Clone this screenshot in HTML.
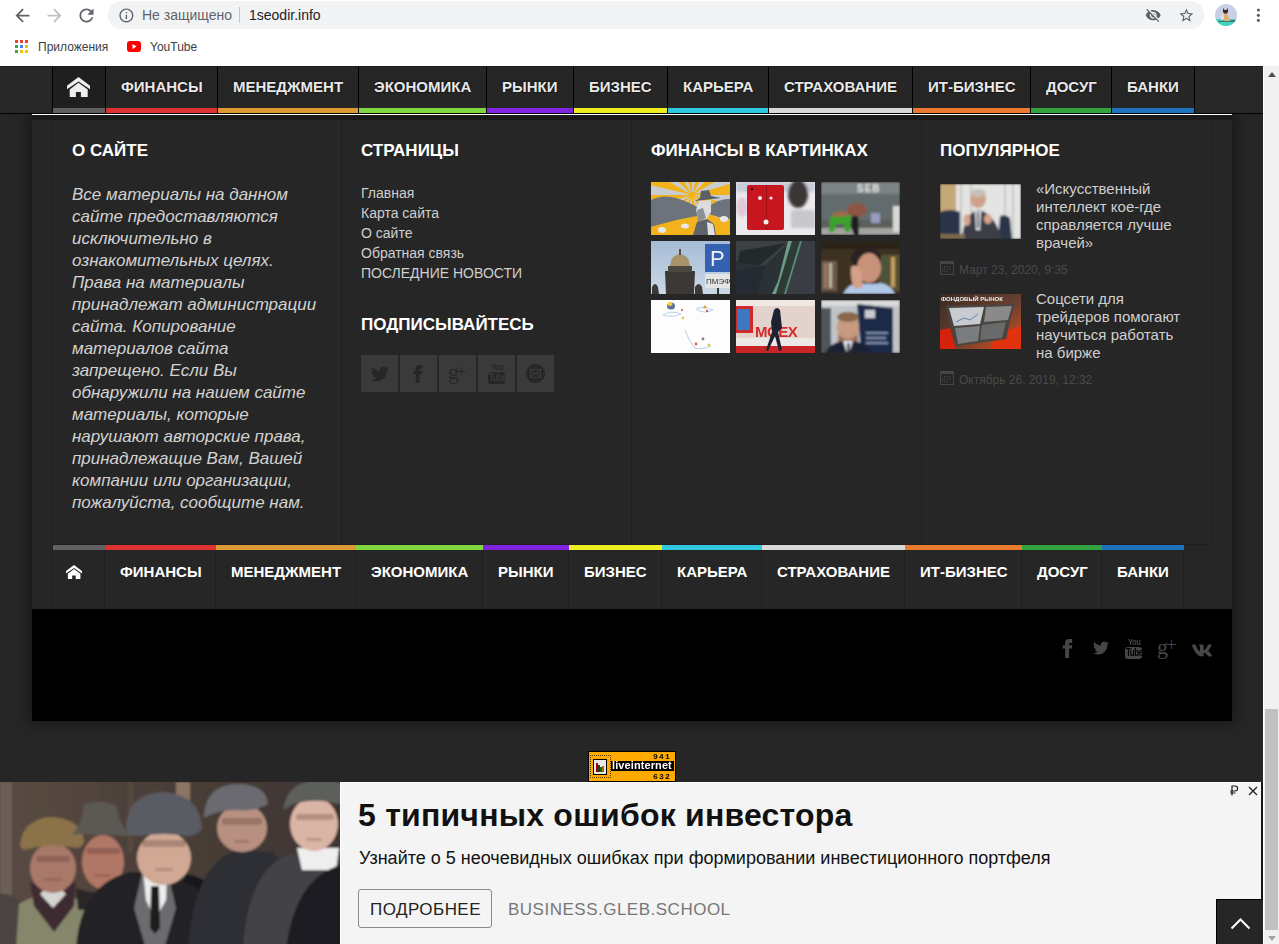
<!DOCTYPE html>
<html><head><meta charset="utf-8">
<style>
*{margin:0;padding:0;box-sizing:border-box}
html,body{width:1279px;height:944px;overflow:hidden}
body{position:relative;background:#262626;font-family:"Liberation Sans",sans-serif}
.abs{position:absolute}
#chrome{position:absolute;left:0;top:0;width:1279px;height:66px;background:#fff}
#addr{position:absolute;left:108px;top:1px;width:1096px;height:28px;border-radius:14px;background:#f1f3f4}
.ctext{position:absolute;font-size:14px;white-space:nowrap;line-height:16px}
#topnav{position:absolute;left:0;top:66px;width:1263px;height:48px;background:#282828;border-top:1px solid #1a1a1a;border-bottom:1px solid #000}
#topnav .items{position:absolute;left:52px;top:0;height:46px;display:flex;border-left:1px solid #000}
#topnav .it{height:46px;border-right:1px solid #000;background:#262626;color:#e8e8e8;font-weight:bold;font-size:15px;line-height:15px;text-align:center;position:relative}
#topnav .it span{position:absolute;left:15px;top:11.5px;white-space:nowrap;text-shadow:0 0 2px #000}
#topnav .it i{position:absolute;left:0;right:0;bottom:0;height:5px}
#wrap{position:absolute;left:32px;top:114px;width:1200px;height:495px;background:#262626;border-top:1px solid #fff}
#strip{position:absolute;left:0;top:0;width:1200px;height:5px;background:#1b1b1b}
#widgets{position:absolute;left:52px;top:120px;width:1159px;height:425px;border-left:1px solid #1f1f1f;border-bottom:1px solid #1e1e1e}
.col{position:absolute;top:0;height:424px;border-right:1px solid #1f1f1f}
.wt{position:absolute;font-size:17px;font-weight:bold;color:#fff;white-space:nowrap;line-height:20px}
#botnav{position:absolute;left:52px;top:545px;height:64px;display:flex;border-left:1px solid #1f1f1f}
#botnav .it{height:64px;border-right:1px solid #1f1f1f;color:#fff;font-weight:bold;font-size:15px;line-height:15px;position:relative}
#botnav .it span{position:absolute;left:15px;top:19px;white-space:nowrap}
#botnav .it i{position:absolute;left:0;right:-1px;top:0;height:5px}
#black{position:absolute;left:32px;top:609px;width:1200px;height:112px;background:#000}
#ad{position:absolute;left:0;top:782px;width:1263px;height:162px;background:#f4f4f4;border-right:2px solid #151515}
#sb{position:absolute;left:1263px;top:66px;width:16px;height:878px;background:#f1f1f1;border-left:1px solid #fff}
</style></head><body>
<div id="chrome">
  <div id="addr"></div>
  <div class="ctext" style="left:142px;top:7px;color:#5f6368">Не защищено</div>
  <div class="abs" style="left:239px;top:7px;width:1px;height:16px;background:#c4c7c5"></div>
  <div class="ctext" style="left:249px;top:7px;color:#202124">1seodir.info</div>

  <svg class="abs" style="left:11.5px;top:4.5px" width="21" height="21" viewBox="0 0 24 24"><path fill="#5f6368" d="M20 11H7.83l5.59-5.59L12 4l-8 8 8 8 1.41-1.41L7.83 13H20v-2z"/></svg>
  <svg class="abs" style="left:43.5px;top:4.5px" width="21" height="21" viewBox="0 0 24 24"><path fill="#bdc1c6" d="M4 11h12.17l-5.59-5.59L12 4l8 8-8 8-1.41-1.41L16.17 13H4v-2z"/></svg>
  <svg class="abs" style="left:75.5px;top:4.5px" width="21" height="21" viewBox="0 0 24 24"><path fill="#5f6368" d="M17.65 6.35C16.2 4.9 14.21 4 12 4c-4.42 0-7.99 3.58-7.99 8s3.57 8 7.99 8c3.73 0 6.84-2.55 7.73-6h-2.08c-.82 2.33-3.04 4-5.650 4-3.31 0-6-2.69-6-6s2.69-6 6-6c1.66 0 3.14.69 4.22 1.78L13 11h7V4l-2.35 2.35z"/></svg>
  <svg class="abs" style="left:117.6px;top:6.6px" width="16.8" height="16.8" viewBox="0 0 24 24"><path fill="#5f6368" d="M11 7h2v2h-2zm0 4h2v6h-2zm1-9C6.48 2 2 6.48 2 12s4.48 10 10 10 10-4.48 10-10S17.52 2 12 2zm0 18c-4.41 0-8-3.590-8-8s3.59-8 8-8 8 3.59 8 8-3.59 8-8 8z"/></svg>
  <svg class="abs" style="left:1145.3px;top:6.7px" width="16.4" height="16.4" viewBox="0 0 24 24"><path fill="#5f6368" d="M12 7c2.76 0 5 2.24 5 5 0 .65-.13 1.26-.36 1.83l2.92 2.92c1.51-1.26 2.7-2.89 3.43-4.75-1.73-4.39-6-7.5-11-7.5-1.4 0-2.74.25-3.980.7l2.16 2.16C10.74 7.13 11.35 7 12 7zM2 4.27l2.28 2.28.46.46C3.08 8.3 1.78 10.02 1 12c1.73 4.39 6 7.5 11 7.5 1.55 0 3.03-.3 4.38-.84l.42.42L19.73 22 21 20.73 3.27 3 2 4.27zM7.53 9.8l1.55 1.55c-.05.21-.08.43-.08.65 0 1.66 1.34 3 3 3 .22 0 .44-.03.65-.08l1.55 1.55c-.67.33-1.41.53-2.2.53-2.76 0-5-2.24-5-5 0-.79.2-1.53.53-2.2zm4.31-.78l3.15 3.15.02-.16c0-1.66-1.34-3-3-3l-.17.01z"/></svg>
  <svg class="abs" style="left:1177.6px;top:6.9px" width="16.8" height="16.8" viewBox="0 0 24 24"><path fill="#5f6368" d="M22 9.24l-7.19-.62L12 2 9.19 8.63 2 9.24l5.46 4.73L5.820 21 12 17.27 18.18 21l-1.63-7.03L22 9.24zM12 15.4l-3.76 2.27 1-4.28-3.32-2.88 4.38-.38L12 6.1l1.71 4.04 4.38.38-3.32 2.88 1 4.28L12 15.4z"/></svg>
  <svg class="abs" style="left:1215px;top:4px" width="22" height="22" viewBox="0 0 22 22"><defs><clipPath id="avc"><circle cx="11" cy="11" r="11"/></clipPath></defs><g clip-path="url(#avc)"><rect width="22" height="22" fill="#c9d0e6"/><rect y="15" width="22" height="7" fill="#45d3bf"/><path d="M3 17 L20 16 L20 18 L3 18z" fill="#3a3a3a" opacity=".6"/><path d="M8 4 L9.5 6 L11.5 6 L13 4 L13 8 L12 9.5 L13.5 12 L14.5 15.5 L15.5 17 L9 17 L9 12 L8.8 8z" fill="#d8b27a"/><path d="M8 4 L9.5 6 L11.5 6 L13 4 L13 8 L11.8 9.6 L9.2 9.6 L8 8z" fill="#3a2a20"/><path d="M6.5 10 L8.5 12 L8.5 16 L6 16z" fill="#e8e8ee" opacity=".7"/></g></svg>
  <svg class="abs" style="left:1255px;top:7px" width="7" height="16" viewBox="0 0 7 16"><circle cx="3.4" cy="3" r="1.6" fill="#5f6368"/><circle cx="3.4" cy="8.3" r="1.6" fill="#5f6368"/><circle cx="3.4" cy="13.3" r="1.6" fill="#5f6368"/></svg>
  <svg class="abs" style="left:15px;top:40px" width="13" height="13" viewBox="0 0 13 13">
    <rect x="0" y="0" width="3" height="3" fill="#ea4335"/><rect x="5" y="0" width="3" height="3" fill="#ea4335"/><rect x="10" y="0" width="3" height="3" fill="#ea4335"/>
    <rect x="0" y="5" width="3" height="3" fill="#34a853"/><rect x="5" y="5" width="3" height="3" fill="#4285f4"/><rect x="10" y="5" width="3" height="3" fill="#fbbc05"/>
    <rect x="0" y="10" width="3" height="3" fill="#34a853"/><rect x="5" y="10" width="3" height="3" fill="#fbbc05"/><rect x="10" y="10" width="3" height="3" fill="#fbbc05"/>
  </svg>
  <svg class="abs" style="left:127px;top:41px" width="14" height="11" viewBox="0 0 14 11"><rect x="0" y="0" width="14" height="11" rx="3" fill="#ff0000"/><path d="M5.5 3 L9.5 5.5 L5.5 8z" fill="#fff"/></svg>
  <div class="ctext" style="left:38px;top:39px;font-size:12px;color:#3c4043">Приложения</div>
  <div class="ctext" style="left:150px;top:39px;font-size:12px;color:#3c4043">YouTube</div>
</div>

<div class="abs" style="left:32px;top:114px;width:1200px;height:607px;box-shadow:0 0 14px 2px rgba(0,0,0,.45);background:#262626"></div>
<div id="topnav">
  <div class="items">
    <div class="it" style="width:53px;background:#1f1f1f"><svg class="abs" style="left:14px;top:10px" width="23" height="20" viewBox="0 0 23 20"><path fill="#eee" d="M11.5 0 L23 8.7 L23 12.3 L11.5 4.4 L0 12.3 L0 8.7z"/><path fill="#eee" d="M11.5 5.8 L20.7 12.4 L20.7 20 L13.9 20 L13.9 15 L8.9 15 L8.9 20 L2.7 20 L2.7 12.4z"/></svg><i style="background:#606060"></i></div>
    <div class="it" style="width:112px"><span>ФИНАНСЫ</span><i style="background:#dd3333"></i></div>
    <div class="it" style="width:141px"><span>МЕНЕДЖМЕНТ</span><i style="background:#dd9933"></i></div>
    <div class="it" style="width:128px"><span>ЭКОНОМИКА</span><i style="background:#81d742"></i></div>
    <div class="it" style="width:87px"><span>РЫНКИ</span><i style="background:#8224e3"></i></div>
    <div class="it" style="width:94px"><span>БИЗНЕС</span><i style="background:#eeee22"></i></div>
    <div class="it" style="width:101px"><span>КАРЬЕРА</span><i style="background:#30c8e0"></i></div>
    <div class="it" style="width:144px"><span>СТРАХОВАНИЕ</span><i style="background:#d8d8d8"></i></div>
    <div class="it" style="width:118px"><span>ИТ-БИЗНЕС</span><i style="background:#ea7a30"></i></div>
    <div class="it" style="width:81px"><span>ДОСУГ</span><i style="background:#33a340"></i></div>
    <div class="it" style="width:83px"><span>БАНКИ</span><i style="background:#1e73be"></i></div>
  </div>
</div>

<div id="wrap"><div id="strip"></div></div>

<div id="widgets">
  <div class="col" style="left:0;width:289px"></div>
  <div class="col" style="left:289px;width:290px"></div>
  <div class="col" style="left:579px;width:290px"></div>
  <div class="col" style="left:869px;width:290px"></div>
</div>


<div class="wt" style="left:72px;top:141px">О САЙТЕ</div>
<div class="abs" style="left:72px;top:184px;width:260px;font-size:17px;font-style:italic;line-height:22px;color:#d2d2d2;white-space:nowrap">Все материалы на данном<br>сайте предоставляются<br>исключительно в<br>ознакомительных целях.<br>Права на материалы<br>принадлежат администрации<br>сайта. Копирование<br>материалов сайта<br>запрещено. Если Вы<br>обнаружили на нашем сайте<br>материалы, которые<br>нарушают авторские права,<br>принадлежащие Вам, Вашей<br>компании или организации,<br>пожалуйста, сообщите нам.</div>

<div class="wt" style="left:361px;top:141px">СТРАНИЦЫ</div>
<div class="abs" style="left:361px;top:183px;font-size:14px;line-height:20px;color:#cfcfcf;white-space:nowrap">Главная<br>Карта сайта<br>О сайте<br>Обратная связь<br>ПОСЛЕДНИЕ НОВОСТИ</div>
<div class="wt" style="left:361px;top:315px">ПОДПИСЫВАЙТЕСЬ</div>

<div class="abs" style="left:361px;top:355px;width:37px;height:37px;background:#3a3a3a"><svg class="abs" style="left:10px;top:10px" width="18" height="18" viewBox="0 0 24 24"><path fill="#262626" d="M23.953 4.57a10 10 0 01-2.825.775 4.958 4.958 0 002.163-2.723c-.951.555-2.005.959-3.127 1.184a4.92 4.92 0 00-8.384 4.482C7.69 8.095 4.067 6.13 1.64 3.162a4.822 4.822 0 00-.666 2.475c0 1.71.87 3.213 2.188 4.096a4.904 4.904 0 01-2.228-.616v.06a4.923 4.923 0 003.946 4.827 4.996 4.996 0 01-2.212.085 4.936 4.936 0 004.604 3.417 9.867 9.867 0 01-6.102 2.105c-.39 0-.779-.023-1.17-.067a13.995 13.995 0 007.557 2.209c9.053 0 13.998-7.496 13.998-13.985 0-.21 0-.42-.015-.63A9.935 9.935 0 0024 4.59z"/></svg></div>
<div class="abs" style="left:400px;top:355px;width:37px;height:37px;background:#3a3a3a"><svg class="abs" style="left:9px;top:10px" width="18" height="18" viewBox="0 0 24 24"><path fill="#262626" d="M9 8H6v4h3v12h5V12h3.642L18 8h-4V6.333C14 5.378 14.192 5 15.115 5H18V0h-3.808C10.596 0 9 1.583 9 4.615V8z"/></svg></div>
<div class="abs" style="left:439px;top:355px;width:37px;height:37px;background:#3a3a3a"><div class="abs" style="left:9px;top:6px;font-family:'Liberation Serif',serif;font-size:22px;line-height:22px;color:#262626">g</div><div class="abs" style="left:17px;top:8px;font-family:'Liberation Serif',serif;font-size:18px;line-height:18px;color:#262626">+</div></div>
<div class="abs" style="left:478px;top:355px;width:37px;height:37px;background:#3a3a3a"><div class="abs" style="left:10px;top:9px"><div class="abs" style="left:0;top:0;width:17px;height:20px"><div class="abs" style="left:3px;top:-1px;font-size:9px;line-height:9px;font-weight:bold;color:#262626;letter-spacing:-0.5px;transform:scaleX(.85);transform-origin:0 0">You</div><div class="abs" style="left:0;top:8px;width:17px;height:12px;border-radius:3px;background:#262626"></div><div class="abs" style="left:1px;top:9px;font-size:10px;line-height:10px;font-weight:bold;color:#3a3a3a;letter-spacing:-0.6px;transform:scaleX(.8);transform-origin:0 0">Tube</div></div></div></div>
<div class="abs" style="left:517px;top:355px;width:37px;height:37px;background:#3a3a3a"><svg class="abs" style="left:9px;top:9px" width="19" height="19" viewBox="0 0 19 19"><circle cx="9.5" cy="9.5" r="9.5" fill="#262626"/><rect x="4.5" y="5.5" width="10" height="8" fill="none" stroke="#3a3a3a" stroke-width="1.2"/><path d="M4.5 5.5 L9.5 10 L14.5 5.5 M4.5 13.5 L8.2 9 M14.5 13.5 L10.8 9" fill="none" stroke="#3a3a3a" stroke-width="1.1"/></svg></div>

<div class="wt" style="left:651px;top:141px">ФИНАНСЫ В КАРТИНКАХ</div>
<div class="abs" id="g1" style="left:651px;top:182px;width:79px;height:53px;overflow:hidden"><svg width="79" height="53" viewBox="0 0 79 53"><defs><filter id="b1"><feGaussianBlur stdDeviation="0.5"/></filter></defs><g filter="url(#b1)">
<rect width="79" height="53" fill="#f2b21c"/>
<path d="M41 13 L131.0 13.0 L128.5 34.0z" fill="#c9cdd2"/><path d="M41 13 L118.9 58.0 L106.3 75.0z" fill="#c9cdd2"/><path d="M41 13 L86.0 90.9 L66.6 99.3z" fill="#c9cdd2"/><path d="M41 13 L41.0 103.0 L20.0 100.5z" fill="#c9cdd2"/><path d="M41 13 L-4.0 90.9 L-21.0 78.3z" fill="#c9cdd2"/><path d="M41 13 L-36.9 58.0 L-45.3 38.6z" fill="#c9cdd2"/><path d="M41 13 L-49.0 13.0 L-46.5 -8.0z" fill="#c9cdd2"/><path d="M41 13 L-36.9 -32.0 L-24.3 -49.0z" fill="#c9cdd2"/><path d="M41 13 L-4.0 -64.9 L15.4 -73.3z" fill="#c9cdd2"/><path d="M41 13 L41.0 -77.0 L62.0 -74.5z" fill="#c9cdd2"/><path d="M41 13 L86.0 -64.9 L103.0 -52.3z" fill="#c9cdd2"/><path d="M41 13 L118.9 -32.0 L127.3 -12.6z" fill="#c9cdd2"/>
<circle cx="41" cy="13" r="3.5" fill="#f4b418"/>
<path d="M0 18 Q12 12 25 16 Q40 20 52 29 L52 34 Q30 38 0 45z" fill="#6c737a"/>
<path d="M58 24 Q70 16 79 17 L79 37 Q68 36 58 32z" fill="#6c737a"/>
<path d="M0 45 Q30 36 52 33 L79 37 L79 53 L0 53z" fill="#f2b21c"/>
<ellipse cx="11" cy="48" rx="4" ry="3" fill="#e8e8e8"/><ellipse cx="34" cy="44" rx="4" ry="2.5" fill="#e8e8e8"/><ellipse cx="73" cy="37" rx="4" ry="3" fill="#e8e8e8"/>
<path d="M44 19 L70 16 L60 14 L58 8 L50 9 L49 16z" fill="#5a6068"/>
<path d="M48 19 L60 18 L60 30 L55 38 L47 36 L45 28z" fill="#dcdcdc"/>
<path d="M46 28 L52 26 L55 36 L47 40z" fill="#8a9098"/>
<path d="M42 53 L46 40 L56 37 L63 42 L65 53z" fill="#5e646c"/>
<path d="M56 40 L62 42 L64 53 L57 53z" fill="#e0e0e0"/>
</g></svg></div>
<div class="abs" id="g2" style="left:736px;top:182px;width:79px;height:53px;overflow:hidden"><svg width="79" height="53" viewBox="0 0 79 53"><defs><filter id="b2"><feGaussianBlur stdDeviation="1.5"/></filter></defs>
<rect width="79" height="53" fill="#eceaee"/>
<g filter="url(#b2)"><rect x="0" y="0" width="79" height="10" fill="#c8ccd8"/><ellipse cx="62" cy="12" rx="10" ry="14" fill="#3a3436"/><rect x="55" y="28" width="24" height="18" fill="#c8c8cc"/><ellipse cx="6" cy="25" rx="6" ry="10" fill="#e0c8d8"/></g>
<rect x="11" y="3" width="37" height="45" rx="2" fill="#c8161e"/>
<rect x="30" y="3" width="1" height="45" fill="#a01016"/>
<circle cx="24" cy="16" r="2" fill="#f0f0f0"/><circle cx="35" cy="16" r="1.6" fill="#f0f0f0"/><circle cx="30" cy="40" r="2.5" fill="#f0f0f0"/>
<circle cx="16" cy="7" r="1.3" fill="#400"/>
</svg></div>
<div class="abs" id="g3" style="left:821px;top:182px;width:79px;height:53px;overflow:hidden"><svg width="79" height="53" viewBox="0 0 79 53"><defs><filter id="b3"><feGaussianBlur stdDeviation="0.8"/></filter></defs><g filter="url(#b3)">
<rect width="79" height="53" fill="#6a7272"/>
<rect x="0" y="0" width="79" height="12" fill="#7c8384"/>
<rect x="0" y="12" width="79" height="26" fill="#646c6c"/>
<rect x="0" y="38" width="79" height="8" fill="#5a5e5c"/>
<rect x="0" y="46" width="79" height="7" fill="#a4a4a0"/>
<text x="36" y="10" font-family="Liberation Sans" font-weight="bold" font-size="10" fill="#e8e8e8" letter-spacing="1">SEB</text>
<ellipse cx="36" cy="28" rx="10" ry="7" fill="#8c5444"/>
<path d="M9 36 Q12 30 24 30 L30 34 L29 50 L24 50 L23 42 L15 42 L13 50 L8 50z" fill="#3aa22c"/>
<path d="M12 31 Q18 28 27 30 L27 34 L12 35z" fill="#9c6a4c"/>
<path d="M31 34 L37 34 L38 53 L33 53 L30 45z" fill="#1a1a1a"/>
<rect x="72" y="24" width="7" height="26" fill="#d8d8d4"/>
<rect x="50" y="31" width="9" height="10" fill="#9a9ac0"/>
</g></svg></div>
<div class="abs" id="g4" style="left:651px;top:241px;width:79px;height:53px;overflow:hidden"><svg width="79" height="53" viewBox="0 0 79 53"><defs><linearGradient id="sky4" x1="0" y1="0" x2="0" y2="1"><stop offset="0" stop-color="#a6bcd6"/><stop offset="1" stop-color="#cad8e6"/></linearGradient><filter id="b4"><feGaussianBlur stdDeviation="0.5"/></filter></defs><g filter="url(#b4)">
<rect width="79" height="53" fill="url(#sky4)"/>
<path d="M19 25 Q20 14 29 13 Q38 14 39 25z" fill="#a89468"/>
<rect x="28" y="8" width="2" height="6" fill="#5a5040"/>
<path d="M14 30 L44 30 L43 53 L15 53z" fill="#3a3836"/>
<rect x="17" y="25" width="24" height="6" fill="#4a4640"/>
<path d="M1 53 L1 46 Q4 40 7 46 L8 53z" fill="#3a3836"/>
<path d="M44 53 L44 46 Q48 40 51 46 L52 53z" fill="#3a3836"/>
<rect x="54" y="3" width="25" height="28" fill="#3462b0"/>
<text x="59" y="25" font-family="Liberation Sans" font-size="22" fill="#f0f0f0">P</text>
<rect x="54" y="33" width="25" height="14" fill="#e4e4e4"/>
<text x="55" y="43" font-family="Liberation Sans" font-size="8" fill="#333">ПМЭФ</text>
<rect x="66" y="47" width="2" height="6" fill="#333"/>
</g></svg></div>
<div class="abs" id="g5" style="left:736px;top:241px;width:79px;height:53px;overflow:hidden"><svg width="79" height="53" viewBox="0 0 79 53"><defs><filter id="b5"><feGaussianBlur stdDeviation="0.7"/></filter></defs><g filter="url(#b5)">
<rect width="79" height="53" fill="#2c3236"/>
<path d="M0 0 L55 0 L28 25 L0 20z" fill="#3a4042"/>
<path d="M4 10 L50 2 L24 24 L2 22z" fill="#23292c"/>
<path d="M66 0 L79 0 L79 53 L50 53z" fill="#3a3c44"/>
<path d="M56 0 L66 0 L50 53 L40 53z" fill="#2e3a36"/>
<path d="M52 0 L56 0 L40 53 L36 53 L42 40z" fill="#6a9a88"/>
<path d="M64 0 L66 0 L50 53 L48 53z" fill="#5a8a78"/>
<path d="M0 30 L30 24 L20 53 L0 53z" fill="#262c30"/>
</g></svg></div>
<div class="abs" id="g6" style="left:821px;top:241px;width:79px;height:53px;overflow:hidden"><svg width="79" height="53" viewBox="0 0 79 53"><defs><filter id="b6"><feGaussianBlur stdDeviation="0.8"/></filter></defs><g filter="url(#b6)">
<rect width="79" height="53" fill="#3c3222"/>
<rect x="0" y="0" width="79" height="8" fill="#2a2418"/>
<rect x="0" y="20" width="16" height="30" fill="#6a5a48"/><rect x="3" y="22" width="3" height="25" fill="#a07860"/><rect x="8" y="22" width="3" height="25" fill="#c0b0a0"/>
<rect x="58" y="14" width="21" height="36" fill="#5a5030"/><rect x="62" y="16" width="3" height="30" fill="#3a5a40"/><rect x="70" y="16" width="4" height="30" fill="#c0a060"/>
<ellipse cx="45" cy="17" rx="15" ry="11" fill="#2a2420"/>
<ellipse cx="48" cy="27" rx="12" ry="15" fill="#c8927a"/>
<path d="M22 53 Q28 42 38 42 Q50 44 60 42 Q70 44 74 53z" fill="#b0c8e8"/>
<path d="M30 26 Q36 22 40 30 L42 46 L34 48 Q29 40 30 26z" fill="#d4a088"/>
</g></svg></div>
<div class="abs" id="g7" style="left:651px;top:300px;width:79px;height:53px;overflow:hidden"><svg width="79" height="53" viewBox="0 0 79 53"><defs><filter id="b7"><feGaussianBlur stdDeviation="0.6"/></filter></defs>
<rect width="79" height="53" fill="#fdfdfd"/><g filter="url(#b7)">
<ellipse cx="20" cy="6" rx="4" ry="3.5" fill="#5a70a0"/><ellipse cx="19" cy="4" rx="2.5" ry="2" fill="#f0d040"/>
<path d="M12 15 Q20 10 30 14 Q22 18 12 15z" fill="none" stroke="#a8c8e0" stroke-width="0.8"/>
<path d="M46 8 Q55 6 62 10 Q54 14 46 10z" fill="none" stroke="#a8c8e0" stroke-width="0.8"/>
<circle cx="54" cy="7" r="1.5" fill="#e0a040"/><circle cx="56" cy="11" r="1.2" fill="#d06060"/>
<circle cx="31" cy="10" r="1.2" fill="#e08060"/><circle cx="32" cy="18" r="1.3" fill="#f0c040"/>
<path d="M34 30 Q38 42 44 48 Q50 50 60 46" fill="none" stroke="#a8c0e0" stroke-width="0.8"/>
<circle cx="45" cy="44" r="1.4" fill="#e06040"/><circle cx="52" cy="39" r="1.4" fill="#808080"/><circle cx="58" cy="45" r="1.3" fill="#e0c040"/>
</g></svg></div>
<div class="abs" id="g8" style="left:736px;top:300px;width:79px;height:53px;overflow:hidden"><svg width="79" height="53" viewBox="0 0 79 53"><defs><filter id="b8"><feGaussianBlur stdDeviation="0.6"/></filter></defs><g filter="url(#b8)">
<rect width="79" height="53" fill="#e2d4cc"/>
<rect x="0" y="0" width="79" height="6" fill="#f0e8e4"/>
<rect x="0" y="6" width="17" height="27" fill="#d02a2a"/><rect x="1" y="9" width="13" height="21" fill="#3a78c0"/>
<text x="19" y="37" font-family="Liberation Sans" font-weight="bold" font-size="15" fill="#d42a2a" letter-spacing="-0.5">MOEX</text>
<rect x="0" y="38" width="79" height="8" fill="#ece8e6"/>
<rect x="0" y="46" width="79" height="7" fill="#c82828"/>
<path d="M38 10 Q41 6 44 10 L46 28 L42 32 L46 50 L43 51 L39 36 L32 51 L30 50 L36 32 L35 22z" fill="#1c2030"/>
</g></svg></div>
<div class="abs" id="g9" style="left:821px;top:300px;width:79px;height:53px;overflow:hidden"><svg width="79" height="53" viewBox="0 0 79 53"><defs><filter id="b9"><feGaussianBlur stdDeviation="0.8"/></filter></defs><g filter="url(#b9)">
<rect width="79" height="53" fill="#c0c4c8"/>
<rect x="0" y="0" width="79" height="6" fill="#d8dadc"/>
<rect x="0" y="8" width="10" height="45" fill="#505458"/>
<path d="M36 4 L72 8 L72 53 L40 53z" fill="#1e2c48"/>
<rect x="44" y="10" width="10" height="8" fill="#c8ccd0"/>
<rect x="45" y="32" width="22" height="2" fill="#8090b0"/><rect x="45" y="37" width="20" height="2" fill="#8090b0"/><rect x="45" y="42" width="22" height="2" fill="#8090b0"/>
<ellipse cx="27" cy="28" rx="11" ry="14" fill="#c89a82"/>
<ellipse cx="27" cy="17" rx="11" ry="5" fill="#8a6848"/>
<path d="M17 34 Q27 44 37 34 L37 42 Q27 48 17 42z" fill="#9a7058"/>
<path d="M4 53 Q10 42 22 41 L32 41 Q44 42 52 53z" fill="#1a2036"/>
<path d="M22 41 L32 41 L28 53 L26 53z" fill="#e8e8ec"/>
<rect x="26" y="43" width="2.5" height="10" fill="#1a1a2a"/>
</g></svg></div>

<div class="wt" style="left:940px;top:141px">ПОПУЛЯРНОЕ</div>
<div class="abs" id="p1" style="left:940px;top:184px;width:81px;height:55px;overflow:hidden"><svg width="81" height="55" viewBox="0 0 81 55"><defs><filter id="bp1"><feGaussianBlur stdDeviation="0.8"/></filter></defs><g filter="url(#bp1)">
<rect width="81" height="55" fill="#d8d8d8"/>
<rect x="0" y="0" width="16" height="55" fill="#c4a878"/>
<rect x="16" y="0" width="65" height="55" fill="#e4e4e2"/>
<rect x="20" y="0" width="2" height="55" fill="#c8c8c8"/><rect x="30" y="0" width="2" height="55" fill="#c8c8c8"/><rect x="64" y="0" width="2" height="55" fill="#c8c8c8"/><rect x="72" y="0" width="2" height="55" fill="#c8c8c8"/>
<path d="M0 28 Q10 24 20 28 L20 50 L0 52z" fill="#2a3448"/>
<path d="M60 32 Q66 30 70 34 L72 55 L58 55z" fill="#2a3448"/>
<ellipse cx="38" cy="15" rx="8" ry="9" fill="#d0a088"/>
<ellipse cx="38" cy="9" rx="8" ry="4" fill="#c8c0b8"/>
<path d="M22 55 Q24 30 38 26 Q54 28 62 55z" fill="#3a3e46"/>
<path d="M35 27 L41 27 L40 46 L36 46z" fill="#e8e8ec"/><rect x="37" y="28" width="2" height="16" fill="#3a4a6a"/>
<ellipse cx="27" cy="36" rx="3.5" ry="6" fill="#d4a48c"/><ellipse cx="48" cy="35" rx="4" ry="5" fill="#d4a48c"/>
<rect x="0" y="50" width="25" height="5" fill="#7a6850"/>
</g></svg></div>
<div class="abs" style="left:1036px;top:180px;font-size:15px;line-height:18px;color:#cfcfcf;white-space:nowrap">«Искусственный<br>интеллект кое-где<br>справляется лучше<br>врачей»</div>
<svg class="abs" style="left:940px;top:261px" width="14" height="14" viewBox="0 0 14 14"><rect x="0.5" y="0.5" width="13" height="13" fill="none" stroke="#454545"/><rect x="0" y="0" width="14" height="3" fill="#454545"/><g fill="#454545"><rect x="4" y="5" width="1.3" height="1.3"/><rect x="6.5" y="5" width="1.3" height="1.3"/><rect x="9" y="5" width="1.3" height="1.3"/><rect x="2" y="7.5" width="1.3" height="1.3"/><rect x="4" y="7.5" width="1.3" height="1.3"/><rect x="6.5" y="7.5" width="1.3" height="1.3"/><rect x="9" y="7.5" width="1.3" height="1.3"/><rect x="2" y="10" width="1.3" height="1.3"/><rect x="4" y="10" width="1.3" height="1.3"/><rect x="6.5" y="10" width="1.3" height="1.3"/></g></svg>
<div class="abs" style="left:959px;top:263px;font-size:12px;line-height:14px;color:#4a4a4a;white-space:nowrap">Март 23, 2020, 9:35</div>
<div class="abs" id="p2" style="left:940px;top:294px;width:81px;height:55px;overflow:hidden"><svg width="81" height="55" viewBox="0 0 81 55"><defs><linearGradient id="gp2" x1="0" y1="0" x2="1" y2="1"><stop offset="0" stop-color="#3a2a24"/><stop offset="0.55" stop-color="#6a4030"/><stop offset="1" stop-color="#e05018"/></linearGradient><filter id="bp2"><feGaussianBlur stdDeviation="0.7"/></filter></defs><g filter="url(#bp2)">
<rect width="81" height="55" fill="url(#gp2)"/>
<path d="M0 36 L10 34 L16 55 L0 55z" fill="#d42010"/>
<path d="M56 40 L81 32 L81 55 L50 55z" fill="#e03010"/>
<path d="M6 12 L74 10 L66 45 L16 52z" fill="#4a4440"/>
<path d="M9 14 L44 13 L40 30 L14 32z" fill="#c8ccd0"/>
<path d="M46 13 L72 12 L68 26 L44 28z" fill="#8a8a8a"/>
<path d="M15 34 L40 32 L38 47 L18 50z" fill="#7a7c80"/>
<path d="M42 31 L66 28 L62 44 L40 46z" fill="#6a6a6a"/>
<path d="M16 28 L24 24 L30 26 L38 20" fill="none" stroke="#4a6a9a" stroke-width="0.8"/>
<text x="1" y="7" font-family="Liberation Sans" font-size="6" font-weight="bold" fill="#f0f0f0">ФОНДОВЫЙ РЫНОК</text>
</g></svg></div>
<div class="abs" style="left:1036px;top:290px;font-size:15px;line-height:18px;color:#cfcfcf;white-space:nowrap">Соцсети для<br>трейдеров помогают<br>научиться работать<br>на бирже</div>
<svg class="abs" style="left:940px;top:371px" width="14" height="14" viewBox="0 0 14 14"><rect x="0.5" y="0.5" width="13" height="13" fill="none" stroke="#454545"/><rect x="0" y="0" width="14" height="3" fill="#454545"/><g fill="#454545"><rect x="4" y="5" width="1.3" height="1.3"/><rect x="6.5" y="5" width="1.3" height="1.3"/><rect x="9" y="5" width="1.3" height="1.3"/><rect x="2" y="7.5" width="1.3" height="1.3"/><rect x="4" y="7.5" width="1.3" height="1.3"/><rect x="6.5" y="7.5" width="1.3" height="1.3"/><rect x="9" y="7.5" width="1.3" height="1.3"/><rect x="2" y="10" width="1.3" height="1.3"/><rect x="4" y="10" width="1.3" height="1.3"/><rect x="6.5" y="10" width="1.3" height="1.3"/></g></svg>
<div class="abs" style="left:959px;top:373px;font-size:12px;line-height:14px;color:#4a4a4a;white-space:nowrap">Октябрь 26, 2019, 12:32</div>

<div id="botnav">
  <div class="it" style="width:52px"><svg class="abs" style="left:13px;top:20px" width="16" height="14" viewBox="0 0 23 20"><path fill="#fff" d="M11.5 0 L23 8.7 L23 12.3 L11.5 4.4 L0 12.3 L0 8.7z"/><path fill="#fff" d="M11.5 5.8 L20.7 12.4 L20.7 20 L13.9 20 L13.9 15 L8.9 15 L8.9 20 L2.7 20 L2.7 12.4z"/></svg><i style="background:#606060"></i></div>
  <div class="it" style="width:111px"><span>ФИНАНСЫ</span><i style="background:#dd3333"></i></div>
  <div class="it" style="width:140px"><span>МЕНЕДЖМЕНТ</span><i style="background:#dd9933"></i></div>
  <div class="it" style="width:127px"><span>ЭКОНОМИКА</span><i style="background:#81d742"></i></div>
  <div class="it" style="width:86px"><span>РЫНКИ</span><i style="background:#8224e3"></i></div>
  <div class="it" style="width:93px"><span>БИЗНЕС</span><i style="background:#eeee22"></i></div>
  <div class="it" style="width:100px"><span>КАРЬЕРА</span><i style="background:#30c8e0"></i></div>
  <div class="it" style="width:143px"><span>СТРАХОВАНИЕ</span><i style="background:#d8d8d8"></i></div>
  <div class="it" style="width:117px"><span>ИТ-БИЗНЕС</span><i style="background:#ea7a30"></i></div>
  <div class="it" style="width:80px"><span>ДОСУГ</span><i style="background:#33a340"></i></div>
  <div class="it" style="width:82px"><span>БАНКИ</span><i style="background:#1e73be"></i></div>
</div>

<div id="black"></div>
<svg class="abs" style="left:1058px;top:639px" width="19" height="19" viewBox="0 0 24 24"><path fill="#464646" d="M9 8H6v4h3v12h5V12h3.642L18 8h-4V6.333C14 5.378 14.192 5 15.115 5H18V0h-3.808C10.596 0 9 1.583 9 4.615V8z"/></svg>
<svg class="abs" style="left:1093px;top:640px" width="16" height="16" viewBox="0 0 24 24"><path fill="#464646" d="M23.953 4.57a10 10 0 01-2.825.775 4.958 4.958 0 002.163-2.723c-.951.555-2.005.959-3.127 1.184a4.92 4.92 0 00-8.384 4.482C7.69 8.095 4.067 6.13 1.64 3.162a4.822 4.822 0 00-.666 2.475c0 1.71.87 3.213 2.188 4.096a4.904 4.904 0 01-2.228-.616v.06a4.923 4.923 0 003.946 4.827 4.996 4.996 0 01-2.212.085 4.936 4.936 0 004.604 3.417 9.867 9.867 0 01-6.102 2.105c-.39 0-.779-.023-1.17-.067a13.995 13.995 0 007.557 2.209c9.053 0 13.998-7.496 13.998-13.985 0-.21 0-.42-.015-.63A9.935 9.935 0 0024 4.59z"/></svg>
<div class="abs" style="left:1125px;top:639px"><div class="abs" style="left:0;top:0;width:17px;height:20px"><div class="abs" style="left:3px;top:-1px;font-size:9px;line-height:9px;font-weight:bold;color:#464646;letter-spacing:-0.5px;transform:scaleX(.85);transform-origin:0 0">You</div><div class="abs" style="left:0;top:8px;width:17px;height:12px;border-radius:3px;background:#464646"></div><div class="abs" style="left:1px;top:9px;font-size:10px;line-height:10px;font-weight:bold;color:#000;letter-spacing:-0.6px;transform:scaleX(.8);transform-origin:0 0">Tube</div></div></div>
<div class="abs" style="left:1157px;top:636px;font-family:'Liberation Serif',serif;font-size:22px;line-height:22px;color:#464646">g</div>
<div class="abs" style="left:1166px;top:635px;font-family:'Liberation Serif',serif;font-size:19px;line-height:19px;color:#464646">+</div>
<svg class="abs" style="left:1187px;top:634.5px" width="30" height="30" viewBox="0 0 24 24"><path fill="#464646" d="M19.376 17.123h-1.744c-.66 0-.864-.525-2.05-1.727-1.033-1-1.49-1.135-1.744-1.135-.356 0-.458.102-.458.593v1.575c0 .424-.135.678-1.253.678-1.846 0-3.896-1.118-5.335-3.202C4.624 10.857 4.030 8.570 4.030 8.096c0-.254.102-.491.593-.491h1.744c.44 0 .61.203.78.677.863 2.49 2.303 4.675 2.896 4.675.22 0 .322-.102.322-.66V9.721c-.068-1.186-.695-1.287-.695-1.710 0-.203.17-.407.44-.407h2.744c.373 0 .508.203.508.643v3.473c0 .372.17.508.271.508.22 0 .407-.136.813-.542 1.254-1.406 2.151-3.574 2.151-3.574.119-.254.322-.491.763-.491h1.744c.525 0 .644.27.525.643-.22 1.017-2.354 4.031-2.354 4.031-.186.305-.254.44 0 .78.186.254.796.779 1.203 1.253.745.847 1.32 1.558 1.473 2.05.17.49-.085.744-.576.744z"/></svg>



<div class="abs" style="left:588px;top:751px;width:88px;height:31px;background:#ffaa00;border:1px solid #000">
  <div class="abs" style="left:1px;top:3px;width:21px;height:23px;border:1px dotted #5a3a00"></div>
  <div class="abs" style="left:4px;top:7px;width:14px;height:16px;background:#e8e8e8;border:1px solid #000"><div class="abs" style="left:2px;top:3px;width:2px;height:9px;background:#900"></div><div class="abs" style="left:4px;top:5px;width:2px;height:7px;background:#333"></div><div class="abs" style="left:6px;top:7px;width:2px;height:5px;background:#070"></div><div class="abs" style="left:8px;top:6px;width:2px;height:6px;background:#a60"></div></div>
  <div class="abs" style="left:22px;top:9px;width:63px;height:10px;background:#000"></div>
  <div class="abs" style="left:23px;top:8px;font-family:'Liberation Sans',sans-serif;font-weight:bold;font-size:11px;line-height:11px;color:#fff;letter-spacing:0.1px;transform:scaleY(0.95)">liveinternet</div>
  <div class="abs" style="left:64px;top:1px;font-family:'Liberation Mono',monospace;font-weight:bold;font-size:8px;line-height:7px;color:#000;letter-spacing:1.2px;transform:scaleY(.8)">941</div>
  <div class="abs" style="left:64px;top:21px;font-family:'Liberation Mono',monospace;font-weight:bold;font-size:8px;line-height:7px;color:#000;letter-spacing:1.2px;transform:scaleY(.8)">632</div>
</div>

<div id="ad">
  <div class="abs" style="left:340px;top:0;width:921px;height:1px;background:#fff"></div><div class="abs" style="left:340px;top:0;width:1px;height:162px;background:#fff"></div>
  <div id="adimg" class="abs" style="left:0;top:0;width:340px;height:162px;background:#4a3c34;overflow:hidden"><svg width="340" height="162" viewBox="0 0 340 162"><defs>
<linearGradient id="adbg" x1="0" y1="0" x2="1" y2="0"><stop offset="0" stop-color="#5a4c44"/><stop offset="0.5" stop-color="#4a3e38"/><stop offset="1" stop-color="#3e3632"/></linearGradient>
<filter id="bad"><feGaussianBlur stdDeviation="1"/></filter></defs>
<g filter="url(#bad)">
<rect x="-5" y="-5" width="350" height="172" fill="url(#adbg)"/>
<rect x="0" y="0" width="12" height="115" fill="#6c5e54"/>
<rect x="176" y="0" width="14" height="22" fill="#8c7464"/>
<rect x="128" y="0" width="5" height="70" fill="#56483e"/>
<path d="M-5 112 Q18 110 26 128 L30 167 L-5 167z" fill="#4c4242"/>
<path d="M16 167 L19 122 Q34 112 52 114 Q74 112 88 124 L90 167z" fill="#86866a"/>
<path d="M30 100 Q52 112 76 100 L74 124 L54 150 L34 124z" fill="#3c2c30"/>
<path d="M40 112 L53 126 L66 112 L60 106 L46 106z" fill="#d4d4d0"/>
<ellipse cx="53" cy="86" rx="23" ry="25" fill="#a87868"/>
<path d="M20 64 Q22 38 50 35 Q80 36 84 58 Q84 64 78 66 Q52 60 24 68z" fill="#8c7248"/>
<path d="M76 106 Q102 116 128 104 L132 128 L78 128z" fill="#2c2828"/>
<ellipse cx="103" cy="80" rx="21" ry="27" fill="#b07666"/>
<path d="M72 52 L132 54 Q120 46 116 24 Q102 16 84 22 Q82 44 72 52z" fill="#5c5852"/>
<path d="M76 167 Q80 102 130 90 L176 90 Q230 100 256 167z" fill="#242428"/>
<path d="M142 92 L168 92 L176 126 L164 167 L146 167 L134 126z" fill="#6c6c70"/>
<path d="M143 88 L167 88 L166 118 L155 138 L146 118z" fill="#eeeeee"/>
<path d="M151 104 L159 104 L160 146 L155 152 L150 146z" fill="#1c1c1c"/>
<ellipse cx="164" cy="76" rx="27" ry="27" fill="#d0a894"/>
<path d="M126 48 Q126 12 162 10 Q200 12 202 46 Q198 54 186 54 Q164 50 140 54 Q128 54 126 48z" fill="#5a5c64"/>
<path d="M186 92 Q202 94 218 108 L208 118 Q196 104 184 100z" fill="#18181a"/>
<path d="M188 167 Q194 80 238 68 L272 70 Q292 82 288 167z" fill="#2e2e34"/>
<ellipse cx="242" cy="46" rx="25" ry="24" fill="#b89080"/>
<path d="M204 34 Q206 2 238 2 Q266 2 268 22 Q254 30 236 28 Q218 28 204 36z" fill="#6a6a70"/>
<path d="M243 167 Q248 84 292 72 L345 76 L345 167z" fill="#424246"/>
<path d="M297 66 L339 66 L336 88 L302 88z" fill="#eeeeee"/>
<ellipse cx="314" cy="42" rx="24" ry="27" fill="#dab4a4"/>
<path d="M284 24 Q288 0 318 -2 Q345 -2 345 8 L345 24 Q322 16 302 20 Q290 22 284 28z" fill="#5c5e5a"/>

<g fill="#3a2420" opacity=".25">
<rect x="36" y="74" width="34" height="6" rx="3"/>
<rect x="86" y="66" width="34" height="6" rx="3"/>
<rect x="142" y="58" width="44" height="7" rx="3"/>
<rect x="222" y="36" width="40" height="7" rx="3"/>
<rect x="296" y="32" width="38" height="6" rx="3"/>
</g>
<g fill="#5a3028" opacity=".22">
<rect x="44" y="96" width="18" height="3" rx="1.5"/>
<rect x="94" y="92" width="16" height="3" rx="1.5"/>
<rect x="155" y="86" width="18" height="3" rx="1.5"/>
<rect x="234" y="58" width="16" height="3" rx="1.5"/>
<rect x="306" y="56" width="16" height="3" rx="1.5"/>
</g>
<path d="M286 167 Q296 92 345 82 L345 167z" fill="#1c1c24"/>
</g>
</svg></div>
    <div class="abs" style="left:358px;top:16px;font-size:32px;font-weight:bold;line-height:34px;color:#111;letter-spacing:0.22px;white-space:nowrap">5 типичных ошибок инвестора</div>
  <div class="abs" style="left:359px;top:66px;font-size:18px;line-height:21px;color:#111;white-space:nowrap">Узнайте о 5 неочевидных ошибках при формировании инвестиционного портфеля</div>
  <div class="abs" style="left:358px;top:107px;width:134px;height:39px;border:1px solid #8a8a8a;border-radius:3px"></div>
  <div class="abs" style="left:370px;top:118px;font-size:17px;line-height:20px;color:#222;letter-spacing:0.45px;white-space:nowrap">ПОДРОБНЕЕ</div>
  <div class="abs" style="left:508px;top:118px;font-size:17px;line-height:20px;color:#777;letter-spacing:0.5px;white-space:nowrap">BUSINESS.GLEB.SCHOOL</div>
  <svg class="abs" style="left:1229px;top:3px" width="10" height="11" viewBox="0 0 10 11"><path d="M3 10.5 V1 H6 Q8.6 1 8.6 3.5 Q8.6 6 6 6 H1.2 M1.2 8 H6.5" fill="none" stroke="#1a1a1a" stroke-width="1.2"/></svg>
  <svg class="abs" style="left:1248px;top:4px" width="10" height="10" viewBox="0 0 10 10"><path d="M1 1 L9 9 M9 1 L1 9" stroke="#222" stroke-width="1.3"/></svg>
</div>
<div class="abs" style="left:1216px;top:899px;width:47px;height:45px;background:#262626;border-top:1px solid #000;border-left:1px solid #000"><svg class="abs" style="left:13px;top:18px" width="21" height="12" viewBox="0 0 21 12"><path d="M1.5 10.5 L10.5 1.5 L19.5 10.5" fill="none" stroke="#fff" stroke-width="2"/></svg></div>

<div id="sb"><svg class="abs" style="left:4px;top:6px" width="8" height="5" viewBox="0 0 8 5"><path d="M0 5 L4 0 L8 5z" fill="#505050"/></svg><div class="abs" style="left:1px;top:643px;width:13px;height:221px;background:#c1c1c1"></div><svg class="abs" style="left:4px;top:870px" width="8" height="5" viewBox="0 0 8 5"><path d="M0 0 L4 5 L8 0z" fill="#a3a3a3"/></svg></div>
</body></html>
